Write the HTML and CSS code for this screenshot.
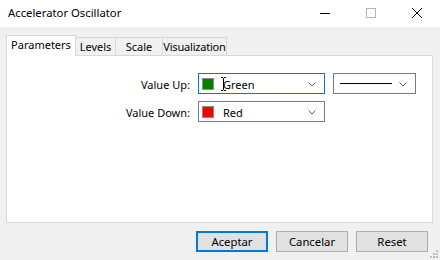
FILE: index.html
```html
<!DOCTYPE html>
<html>
<head>
  <link rel="stylesheet" href="styles.css">
</head>
<body>
  <div class="window">
    <div class="titlebar">
      <span class="title">Accelerator Oscillator</span>
      <div class="caption-buttons">
        <span class="cap-btn">
          <svg width="12" height="12" viewBox="0 0 12 12"><path d="M1 6.5H11" stroke="#000" stroke-width="1"/></svg>
        </span>
        <span class="cap-btn">
          <svg width="12" height="12" viewBox="0 0 12 12"><rect x="1.5" y="1.5" width="9" height="9" fill="none" stroke="#b4b4b4" stroke-width="1"/></svg>
        </span>
        <span class="cap-btn">
          <svg width="12" height="12" viewBox="0 0 12 12"><path d="M1 1L11 11M11 1L1 11" stroke="#000" stroke-width="1"/></svg>
        </span>
      </div>
    </div>

    <div class="tabs">
      <div class="tab active">Parameters</div>
      <div class="tab tab-levels">Levels</div>
      <div class="tab tab-scale">Scale</div>
      <div class="tab tab-vis">Visualization</div>
    </div>

    <div class="panel">
      <div class="form">
        <label class="field-label">Value Up:</label>
        <div class="combo combo-color focused">
          <span class="swatch swatch-green"></span>
          <span class="combo-text">Green</span>
          <svg class="chevron" width="8" height="5" viewBox="0 0 8 5"><path d="M0.5 0.5L4 4L7.5 0.5" fill="none" stroke="#606060" stroke-width="1"/></svg>
          <!-- mouse I-beam cursor -->
          <svg class="ibeam" width="5" height="14" viewBox="0 0 5 14">
            <path d="M0 0.5H2M3 0.5H5M2.5 1V13M0 13.5H2M3 13.5H5" stroke="#000" stroke-width="1"/>
          </svg>
        </div>
        <div class="combo combo-line">
          <span class="line-sample"></span>
          <svg class="chevron" width="8" height="5" viewBox="0 0 8 5"><path d="M0.5 0.5L4 4L7.5 0.5" fill="none" stroke="#606060" stroke-width="1"/></svg>
        </div>

        <label class="field-label">Value Down:</label>
        <div class="combo combo-color">
          <span class="swatch swatch-red"></span>
          <span class="combo-text">Red</span>
          <svg class="chevron" width="8" height="5" viewBox="0 0 8 5"><path d="M0.5 0.5L4 4L7.5 0.5" fill="none" stroke="#606060" stroke-width="1"/></svg>
        </div>
      </div>
    </div>

    <div class="buttons">
      <button class="btn default">Aceptar</button>
      <button class="btn">Cancelar</button>
      <button class="btn">Reset</button>
    </div>

    <svg class="grip" width="8" height="8" viewBox="0 0 8 8">
      <rect x="6" y="0" width="2" height="2" fill="#bcbcbc"/>
      <rect x="3" y="3" width="2" height="2" fill="#bcbcbc"/>
      <rect x="6" y="3" width="2" height="2" fill="#bcbcbc"/>
      <rect x="0" y="6" width="2" height="2" fill="#bcbcbc"/>
      <rect x="3" y="6" width="2" height="2" fill="#bcbcbc"/>
      <rect x="6" y="6" width="2" height="2" fill="#bcbcbc"/>
    </svg>
  </div>
</body>
</html>
```

FILE: styles.css
```css
body {
  margin: 0;
  font-family: "Noto Sans", "Liberation Sans", sans-serif;
  font-size: 11px;
  color: #000;
  background: #f0f0f0;
}

.window {
  position: relative;
  width: 440px;
  height: 260px;
  background: #f0f0f0;
  overflow: hidden;
}

/* Title bar */
.titlebar {
  height: 27px;
  background: #fff;
  display: flex;
  align-items: center;
  justify-content: space-between;
}

.title {
  padding-left: 8px;
  font-size: 11.3px;
  line-height: 16px;
  margin-top: -2px;
}

.caption-buttons {
  display: flex;
  margin-top: -2px;
}

.cap-btn {
  width: 46px;
  height: 20px;
  display: flex;
  align-items: center;
  justify-content: center;
}

/* Tabs */
.tabs {
  position: relative;
  z-index: 1;
  display: flex;
  align-items: flex-start;
  margin: 8px 0 0 6px;
  height: 21px;
}

.tab {
  box-sizing: border-box;
  height: 18px;
  margin-top: 2px;
  border: 1px solid #d9d9d9;
  border-left: none;
  border-bottom: none;
  background: #f0f0f0;
  text-align: center;
  line-height: 17px;
  white-space: nowrap;
}

.tab.active {
  height: 21px;
  margin-top: 0;
  width: 70px;
  border-left: 1px solid #d9d9d9;
  background: #fff;
  line-height: 17px;
}

.tab-levels { width: 40px; }
.tab-scale { width: 47px; }
.tab-vis { width: 64px; letter-spacing: -0.2px; }

/* Panel */
.panel {
  box-sizing: border-box;
  height: 168px;
  margin: -1px 7px 0 6px;
  border: 1px solid #d9d9d9;
  background: #fff;
  padding-top: 17px;
}

.form {
  display: grid;
  grid-template-columns: 183px 127px 83px;
  column-gap: 8px;
  row-gap: 7px;
  align-items: center;
}

.field-label {
  text-align: right;
  padding-top: 1px;
}

.combo {
  position: relative;
  box-sizing: border-box;
  height: 21px;
  border: 1px solid #7a7a7a;
  background: #fff;
  display: flex;
  align-items: center;
  padding: 0 8px 0 3px;
}

.combo.focused {
  border-color: #0078d7;
}

.swatch {
  box-sizing: border-box;
  width: 12px;
  height: 12px;
  border: 1px solid #8c8c8c;
}

.swatch-green { background: #008000; }
.swatch-red { background: #ff0000; }

.combo-text {
  margin-left: 9px;
  flex: 1;
  padding-top: 1px;
}

.chevron {
  margin-left: auto;
  margin-top: 1px;
}

.ibeam {
  position: absolute;
  left: 22px;
  top: 3px;
}

.combo-line {
  padding-left: 6px;
}

.line-sample {
  width: 52px;
  height: 1px;
  background: #000;
  margin-top: -1px;
}

/* Bottom buttons */
.buttons {
  display: flex;
  justify-content: flex-end;
  gap: 8px;
  margin-top: 8px;
  padding-right: 12px;
}

.btn {
  box-sizing: border-box;
  width: 72px;
  height: 21px;
  padding: 0;
  border: 1px solid #adadad;
  background: #e1e1e1;
  font-family: inherit;
  font-size: 11.3px;
  color: #000;
}

.btn.default {
  border: 2px solid #0078d7;
}

.grip {
  position: absolute;
  right: 2px;
  bottom: 2px;
}
```
